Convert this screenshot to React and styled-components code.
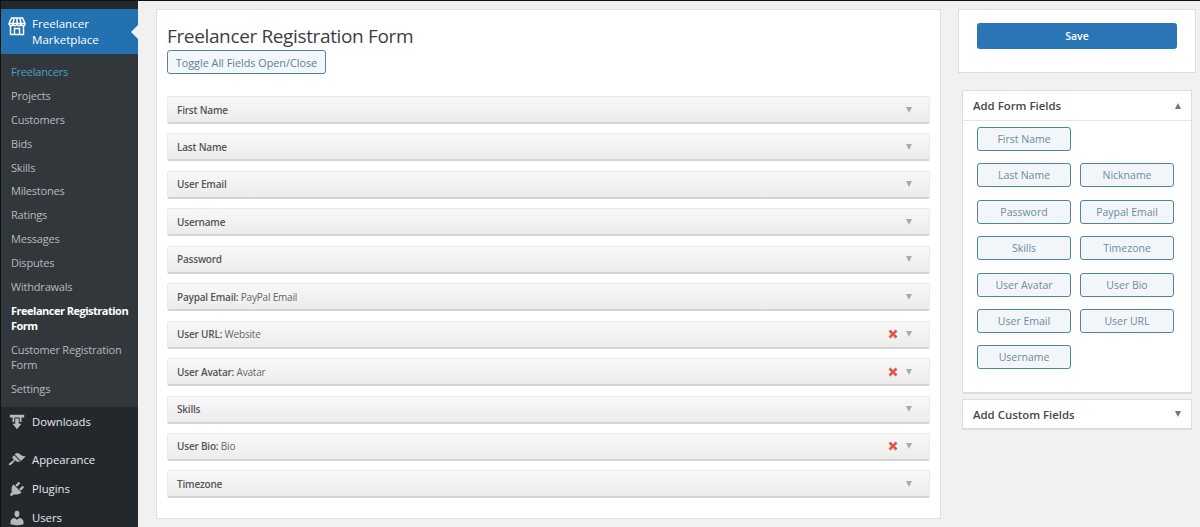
import React from "react";
import styled, { createGlobalStyle } from "styled-components";

const GlobalStyle = createGlobalStyle`
  html, body {
    margin: 0;
    padding: 0;
    height: 527px;
    overflow: hidden;
    background: #f1f1f1;
    font-family: "Open Sans", "Noto Sans", sans-serif;
  }
  * { box-sizing: border-box; }
`;

const Page = styled.div`
  display: flex;
  height: 527px;
  overflow: hidden;
  border-top: 1px solid #111;
`;

const Sidebar = styled.nav`
  width: 138px;
  flex: none;
  padding-top: 8px;
  background: #23282d;
  border-left: 1px solid #111;
  overflow: hidden;
`;

const ActiveItem = styled.div`
  position: relative;
  display: flex;
  height: 45px;
  padding: 7px 0 0 7px;
  gap: 6px;
  background: #2271b1;
  color: #fff;
  font-size: 11.6px;
  line-height: 16px;

  &::after {
    content: "";
    position: absolute;
    right: 0;
    top: 16px;
    border: 7px solid transparent;
    border-right-color: #f1f1f1;
  }
`;

const SubMenu = styled.div`
  display: flex;
  flex-direction: column;
  height: 353px;
  padding: 8px 0 0 10px;
  background: #32373c;
`;

const SubItem = styled.div`
  font-size: 11px;
  letter-spacing: ${(p) => (p.$current ? "-0.5px" : "-0.2px")};
  line-height: 15px;
  padding: 2px 0 6.9px;
  color: ${(p) => (p.$active ? "#4d9fc4" : p.$current ? "#fff" : "#b4b9be")};
  font-weight: ${(p) => (p.$current ? 700 : 400)};
`;

const MenuItem = styled.div`
  display: flex;
  align-items: center;
  gap: 6px;
  height: 29px;
  padding-left: 7px;
  margin-bottom: ${(p) => p.$after || 0}px;
  color: #e6e8ea;
  font-size: 11.3px;

  svg { flex: none; }
`;

const Content = styled.main`
  display: flex;
  flex: 1;
  align-items: flex-start;
  padding: 8px 4px 0 18px;
  gap: 17px;
`;

const FormPanel = styled.section`
  width: 785px;
  height: 510px;
  padding: 13px 10px 0 10px;
  background: #fff;
  border: 1px solid #e0e0e0;
`;

const Title = styled.h1`
  margin: 0 0 1px;
  font-size: 19px;
  letter-spacing: -0.36px;
  line-height: 26px;
  font-weight: 400;
  color: #3a3f44;
`;

const ToggleButton = styled.button`
  display: block;
  height: 24px;
  width: 159px;
  padding: 0;
  margin-bottom: 22px;
  background: #f3f7fa;
  border: 1px solid #4f84a3;
  border-radius: 3px;
  color: #5a8199;
  font: 400 10.8px "Open Sans", sans-serif;
`;

const Rows = styled.div`
  display: flex;
  flex-direction: column;
  gap: 9.45px;
`;

const Row = styled.div`
  display: flex;
  align-items: center;
  height: 28px;
  padding: 0 17px 0 9px;
  background: linear-gradient(#f8f8f8, #ececec);
  border: 1px solid #eaeaea;
  border-bottom: 2px solid #d4d4d4;
  border-radius: 2px;
  font-size: 10px;
  letter-spacing: -0.2px;
`;

const RowLabel = styled.span`
  flex: 1;
  font-weight: 600;
  color: #555;
`;

const RowValue = styled.span`
  font-weight: 400;
  color: #666;
`;

const Remove = styled.svg`
  width: 10px;
  height: 10px;
  margin-right: 8px;
`;

const Caret = styled.span`
  width: 0;
  height: 0;
  border-left: 3.5px solid transparent;
  border-right: 3.5px solid transparent;
  border-top: 6px solid ${(p) => p.$color || "#aaa"};
`;

const CaretUp = styled(Caret)`
  border-top: 0;
  border-bottom: 6px solid #777;
`;

const SideColumn = styled.aside`
  display: flex;
  flex-direction: column;
  align-items: center;
  width: 238px;
`;

const SavePanel = styled.section`
  width: 238px;
  height: 64px;
  padding: 13px 18px 0 18px;
  margin-bottom: 17px;
  background: #fff;
  border: 1px solid #ddd;
`;

const SaveButton = styled.button`
  display: block;
  width: 200px;
  height: 26px;
  background: #2a75b5;
  border: 0;
  border-radius: 3px;
  color: #fff;
  font: 600 10.5px "Open Sans", sans-serif;
`;

const Box = styled.section`
  width: 230px;
  background: #fff;
  border: 1px solid #ddd;
  border-bottom-width: 2px;
  margin-bottom: 5px;
`;

const BoxHeader = styled.header`
  display: flex;
  align-items: center;
  justify-content: space-between;
  height: ${(p) => p.$h}px;
  padding: 0 10px;
  ${(p) => p.$line && "border-bottom: 1px solid #e5e5e5;"}
  color: #44484c;
  font-size: 11.4px;
  font-weight: 600;
`;

const FieldGrid = styled.div`
  display: grid;
  grid-template-columns: 94px 94px;
  grid-auto-rows: 24px;
  gap: 12.4px 9px;
  height: 271px;
  padding: 6px 0 0 14px;
`;

const FieldButton = styled.button`
  padding: 0;
  background: #f3f6f9;
  border: 1px solid #4f84a3;
  border-radius: 3px;
  color: #6b8ba3;
  font: 400 10.5px "Open Sans", sans-serif;
  grid-column: ${(p) => (p.$first ? 1 : "auto")};
`;

const rows = [
  ["First Name"],
  ["Last Name"],
  ["User Email"],
  ["Username"],
  ["Password"],
  ["Paypal Email", "PayPal Email"],
  ["User URL", "Website", true],
  ["User Avatar", "Avatar", true],
  ["Skills"],
  ["User Bio", "Bio", true],
  ["Timezone"],
];

const submenu = [
  { text: "Freelancers", active: true },
  { text: "Projects" },
  { text: "Customers" },
  { text: "Bids" },
  { text: "Skills" },
  { text: "Milestones" },
  { text: "Ratings" },
  { text: "Messages" },
  { text: "Disputes" },
  { text: "Withdrawals" },
  { text: "Freelancer Registration Form", current: true },
  { text: "Customer Registration Form" },
  { text: "Settings" },
];

const fields = [
  ["First Name", true],
  ["Last Name", true],
  ["Nickname"],
  ["Password"],
  ["Paypal Email"],
  ["Skills"],
  ["Timezone"],
  ["User Avatar"],
  ["User Bio"],
  ["User Email"],
  ["User URL"],
  ["Username"],
];

const StoreIcon = () => (
  <svg width="18" height="20" viewBox="0 0 18 20" fill="none" stroke="#fff" strokeWidth="1.5" style={{ flex: "none" }}>
    <path d="M3.500 2h11L17 7.500c0 1.500-1.200 2.200-2 2.200s-2-.7-2-2.200c0 1.500-1.200 2.200-2 2.200S9 8.500 9 7.500c0 1-1.200 2.200-2 2.200S5 9 5 7.500c0 1.500-1.200 2.200-2 2.200S1 9 1 7.500z" />
    <path d="M1 7.500h16M6 2.500 5 7.500M12 2.500l1 5M9 2v5.500" />
    <path d="M2.500 10v8.500h13V10M6.500 18.500v-6h5v6" />
  </svg>
);

const DownloadIcon = () => (
  <svg width="18" height="18" viewBox="0 0 20 20" fill="#b4b9be">
    <path d="M2 2h16v3h-3v5h-2V5H7v5H5V5H2z" />
    <path d="M8 6h4v6h3l-5 6-5-6h3z" />
  </svg>
);

const AppearanceIcon = () => (
  <svg width="18" height="18" viewBox="0 0 20 20" fill="#b4b9be">
    <path d="M14.480 11.060L7.410 3.990l1.500-1.500c.5-.56 2.300-.47 3.510.32 1.210.8 1.430 1.280 2.910 2.100 1.180.64 2.450 1.260 4.450.85zm-.71.71L6.700 4.700 4.930 6.470c-.39.39-.39 1.020 0 1.410l1.060 1.060c.39.39.39 1.030 0 1.420-.6.6-1.430 1.110-2.210 1.690-.35.26-.7.53-1.010.84C1.430 13.230.4 14.980 1.100 15.680c.71.71 2.450-.33 3.800-1.680.31-.31.58-.66.84-1.010.58-.78 1.090-1.610 1.690-2.210.39-.39 1.020-.39 1.410 0l1.060 1.060c.39.39 1.020.39 1.410 0z" />
  </svg>
);

const PluginsIcon = () => (
  <svg width="18" height="18" viewBox="0 0 20 20" fill="#b4b9be">
    <path d="M13.110 4.360L9.870 7.600 8 5.730l3.240-3.240c.35-.34 1.050-.2 1.560.32.52.51.66 1.210.31 1.550zm-8 1.770l.91-1.120 9.010 9.010-1.190.84c-.71.71-2.630 1.160-3.820 1.160H6.140L4.900 17.260c-.59.59-1.540.59-2.120 0-.59-.58-.59-1.530 0-2.120l1.240-1.240v-3.880c0-1.130.4-3.190 1.090-3.890zm7.260 3.970l3.240-3.240c.34-.35 1.040-.21 1.550.31.52.51.66 1.210.31 1.550l-3.240 3.250z" />
  </svg>
);

const UsersIcon = () => (
  <svg width="18" height="18" viewBox="0 0 20 20" fill="#b4b9be">
    <path d="M10 9.250c-2.270 0-2.730-3.440-2.730-3.440C7 4.020 7.820 2 9.970 2c2.160 0 2.980 2.020 2.710 3.810 0 0-.41 3.440-2.680 3.440zm0 2.570L12.720 10c2.390 0 4.520 2.330 4.520 4.530v2.490s-3.650 1.130-7.240 1.130c-3.650 0-7.240-1.130-7.240-1.130v-2.490c0-2.250 1.940-4.480 4.470-4.480z" />
  </svg>
);

function App() {
  return (
    <Page>
      <GlobalStyle />
      <Sidebar>
        <ActiveItem>
          <StoreIcon />
          <span>
            Freelancer
            <br />
            Marketplace
          </span>
        </ActiveItem>
        <SubMenu>
          {submenu.map((item) => (
            <SubItem key={item.text} $active={item.active} $current={item.current}>
              {item.text}
            </SubItem>
          ))}
        </SubMenu>
        <MenuItem $after={9}>
          <DownloadIcon />
          Downloads
        </MenuItem>
        <MenuItem>
          <AppearanceIcon />
          Appearance
        </MenuItem>
        <MenuItem>
          <PluginsIcon />
          Plugins
        </MenuItem>
        <MenuItem>
          <UsersIcon />
          Users
        </MenuItem>
      </Sidebar>
      <Content>
        <FormPanel>
          <Title>Freelancer Registration Form</Title>
          <ToggleButton>Toggle All Fields Open/Close</ToggleButton>
          <Rows>
            {rows.map(([label, value, removable]) => (
              <Row key={label}>
                <RowLabel>
                  {label}
                  {value && ":"}
                  {value && <RowValue> {value}</RowValue>}
                </RowLabel>
                {removable && (
                  <Remove viewBox="0 0 10 10">
                    <path d="M1.500 1.500l7 7M8.500 1.500l-7 7" stroke="#e0584a" strokeWidth="2.600" />
                  </Remove>
                )}
                <Caret />
              </Row>
            ))}
          </Rows>
        </FormPanel>
        <SideColumn>
          <SavePanel>
            <SaveButton>Save</SaveButton>
          </SavePanel>
          <Box>
            <BoxHeader $h={30} $line>
              Add Form Fields
              <CaretUp />
            </BoxHeader>
            <FieldGrid>
              {fields.map(([name, first]) => (
                <FieldButton key={name} $first={first}>
                  {name}
                </FieldButton>
              ))}
            </FieldGrid>
          </Box>
          <Box>
            <BoxHeader $h={28}>
              Add Custom Fields
              <Caret $color="#777" />
            </BoxHeader>
          </Box>
        </SideColumn>
      </Content>
    </Page>
  );
}

export default App;
